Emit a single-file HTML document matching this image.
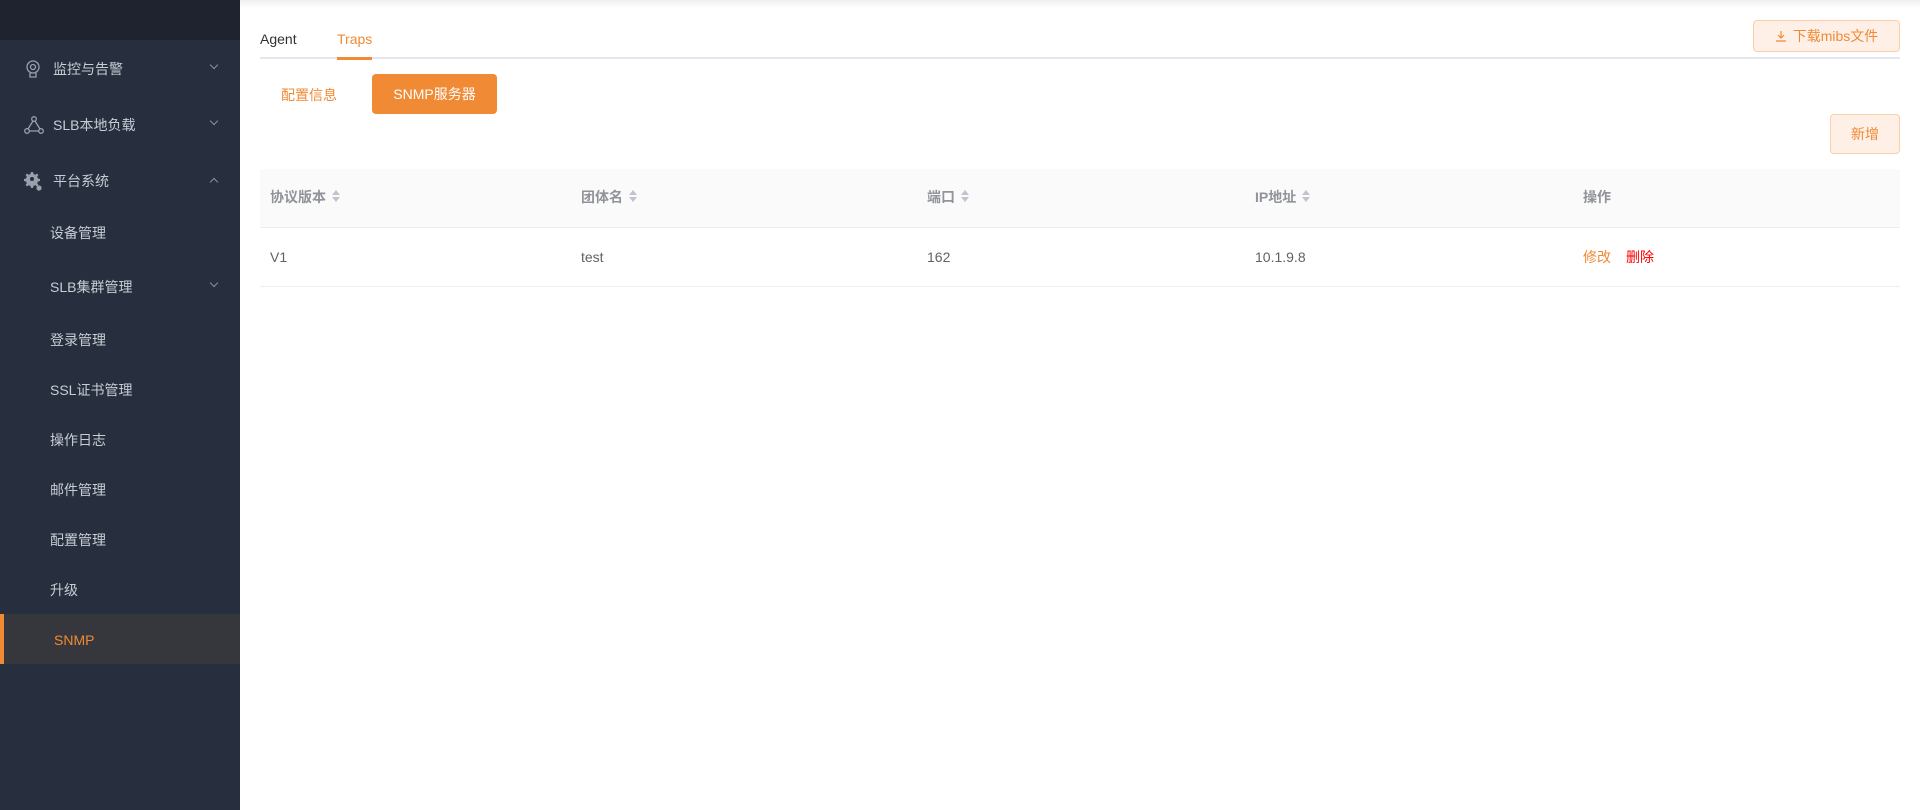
<!DOCTYPE html>
<html><head><meta charset="utf-8"><style>
*{margin:0;padding:0;box-sizing:border-box}
body{width:1920px;height:810px;position:relative;overflow:hidden;background:#fff;font-family:"Liberation Sans","Noto Sans CJK SC",sans-serif;font-size:14px}
.sb{position:absolute;left:0;top:0;width:240px;height:810px;background:#272f3e}
.sbh{position:absolute;left:0;top:0;width:240px;height:40px;background:#1f232f}
.it{position:absolute;left:0;width:240px;height:20px;line-height:20px;color:#c8ccd4;font-size:14px}
.it span{position:absolute;left:53px;top:0}
.sub span{left:50px}
.arr{position:absolute;left:211px;top:3px;width:6px;height:6px;border-right:1px solid #8a909c;border-bottom:1px solid #8a909c;transform:rotate(45deg)}
.up{transform:rotate(-135deg);top:8px}
.ico{position:absolute;left:24px;top:0}
.act{position:absolute;left:0;top:614px;width:240px;height:50px;background:#36373d;border-left:4px solid #f08a35}
.abs{position:absolute}
.th{position:absolute;top:189px;color:#909399;font-weight:bold;font-size:14px;line-height:16px}
.td{position:absolute;top:249px;color:#606266;font-size:14px;line-height:16px}
.sort{display:inline-block;vertical-align:middle;margin-left:6px;width:8px;height:12px;position:relative;top:-2px}
.sort:before{content:"";position:absolute;left:0;top:0;border:4px solid transparent;border-top:none;border-bottom:5px solid #c0c4cc}
.sort:after{content:"";position:absolute;left:0;top:7px;border:4px solid transparent;border-bottom:none;border-top:5px solid #c0c4cc}
</style></head><body>
<div class="sb">
<div class="sbh"></div>
<div class="it" style="top:59px"><svg class="ico" width="18" height="20" viewBox="0 0 18 20" fill="none" stroke="#9aa0ab" stroke-width="1.3"><circle cx="9" cy="8" r="6"/><circle cx="9" cy="8" r="2.5"/><path d="M6 14v4h6v-4"/></svg><span>监控与告警</span><i class="arr"></i></div>
<div class="it" style="top:115px"><svg class="ico" width="20" height="20" viewBox="0 0 20 20" fill="none" stroke="#9aa0ab" stroke-width="1.3"><circle cx="10" cy="4" r="2.3"/><circle cx="3" cy="16" r="2.3"/><circle cx="17" cy="16" r="2.3"/><path d="M9 6L4 14M11 6l5 8M5.3 16h9.4"/></svg><span>SLB本地负载</span><i class="arr"></i></div>
<div class="it" style="top:171px"><svg class="ico" width="20" height="22" viewBox="0 0 20 22" fill="#9aa0ab"><path d="M7 1h2l.5 2 1.8.8 1.7-1.2 1.4 1.4-1.2 1.7.8 1.8 2 .5v2l-2 .5-.8 1.8 1.2 1.7-1.4 1.4-1.7-1.2-1.8.8-.5 2H7l-.5-2-1.8-.8-1.7 1.2-1.4-1.4 1.2-1.7-.8-1.8-2-.5v-2l2-.5.8-1.8-1.2-1.7 1.4-1.4 1.7 1.2 1.8-.8z"/><circle cx="8" cy="8" r="2" fill="#272f3e"/><circle cx="15" cy="17" r="2.6"/></svg><span>平台系统</span><i class="arr up"></i></div>
<div class="it sub" style="top:223px"><span>设备管理</span></div>
<div class="it sub" style="top:277px"><span>SLB集群管理</span><i class="arr"></i></div>
<div class="it sub" style="top:330px"><span>登录管理</span></div>
<div class="it sub" style="top:380px"><span>SSL证书管理</span></div>
<div class="it sub" style="top:430px"><span>操作日志</span></div>
<div class="it sub" style="top:480px"><span>邮件管理</span></div>
<div class="it sub" style="top:530px"><span>配置管理</span></div>
<div class="it sub" style="top:580px"><span>升级</span></div>
<div class="act"></div>
<div class="it" style="top:630px;color:#f08a35"><span style="left:54px">SNMP</span></div>
</div>
<div class="abs" style="left:240px;top:0;width:1680px;height:8px;background:linear-gradient(#f0f0f0,#fff)"></div>
<div class="abs" style="left:260px;top:31px;color:#303133;font-size:14px">Agent</div>
<div class="abs" style="left:337px;top:31px;color:#f08a35;font-size:14px">Traps</div>
<div class="abs" style="left:260px;top:57px;width:1640px;height:2px;background:#e4e5ee"></div>
<div class="abs" style="left:337px;top:57px;width:35px;height:3px;background:#f08a35"></div>
<div class="abs" style="left:1753px;top:20px;width:147px;height:32px;background:#fef0e6;border:1px solid #fbcfa8;border-radius:4px;color:#f08a35;font-size:14px;line-height:30px;text-align:center"><svg width="12" height="12" viewBox="0 0 12 12" fill="none" stroke="#f08a35" stroke-width="1.2" style="vertical-align:-1px;margin-right:6px"><path d="M6 1v7M3 5l3 3 3-3M1 11h10"/></svg>下载mibs文件</div>
<div class="abs" style="left:281px;top:85px;color:#f08a35;font-size:14px">配置信息</div>
<div class="abs" style="left:372px;top:74px;width:125px;height:40px;background:#f08a35;border-radius:4px;color:#fff;font-size:14px;line-height:40px;text-align:center">SNMP服务器</div>
<div class="abs" style="left:1830px;top:114px;width:70px;height:40px;background:#fef0e6;border:1px solid #fbcfa8;border-radius:4px;color:#f08a35;font-size:14px;line-height:38px;text-align:center">新增</div>
<div class="abs" style="left:260px;top:169px;width:1640px;height:59px;background:#fafafa;border-bottom:1px solid #ebeef5"></div>
<div class="abs" style="left:260px;top:286px;width:1640px;height:1px;background:#ebeef5"></div>
<div class="th" style="left:270px">协议版本<i class="sort"></i></div>
<div class="th" style="left:581px">团体名<i class="sort"></i></div>
<div class="th" style="left:927px">端口<i class="sort"></i></div>
<div class="th" style="left:1255px">IP地址<i class="sort"></i></div>
<div class="th" style="left:1583px">操作</div>
<div class="td" style="left:270px">V1</div>
<div class="td" style="left:581px">test</div>
<div class="td" style="left:927px">162</div>
<div class="td" style="left:1255px">10.1.9.8</div>
<div class="td" style="left:1583px;color:#f08a35">修改</div>
<div class="td" style="left:1626px;color:#f00">删除</div>
</body></html>
